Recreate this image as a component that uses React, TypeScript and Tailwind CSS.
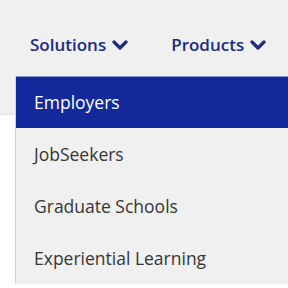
import { useState } from "react";

const items = ["Employers", "JobSeekers", "Graduate Schools", "Experiential Learning"];

function Chevron() {
  return (
    <svg width="16" height="12" viewBox="0 0 16 12" className="ml-[6px]">
      <path d="M2 3 L8 9 L14 3" fill="none" stroke="#1f2b7b" strokeWidth="3.2" strokeLinecap="round" strokeLinejoin="round" />
    </svg>
  );
}

export default function App() {
  const [active] = useState(0);

  return (
    <div className="relative w-[288px] h-[288px] overflow-hidden bg-white" style={{ fontFamily: '"Open Sans", sans-serif' }}>
      <div className="h-[115px] bg-[#f0f0f0] border-b border-[#e2e2e2]">
        <nav className="flex items-center gap-[43px] pl-[30px] pt-[32px] text-[17px] font-semibold text-[#1f2b7b]">
          <button className="flex items-center">
            Solutions <Chevron />
          </button>
          <button className="flex items-center">
            Products <Chevron />
          </button>
        </nav>
      </div>

      <ul className="absolute left-[15px] top-[76px] w-[300px] bg-[#f0f0f0] border-l border-[#d4d4d4] text-[17.5px]">
        {items.map((item, i) => (
          <li
            key={item}
            className={
              i === active
                ? "h-[52px] flex items-center pl-[18px] bg-[#14299b] text-white border-t border-[#8b94cc]"
                : "h-[52px] flex items-center pl-[18px] text-[#363636]"
            }
          >
            {item}
          </li>
        ))}
      </ul>
    </div>
  );
}
